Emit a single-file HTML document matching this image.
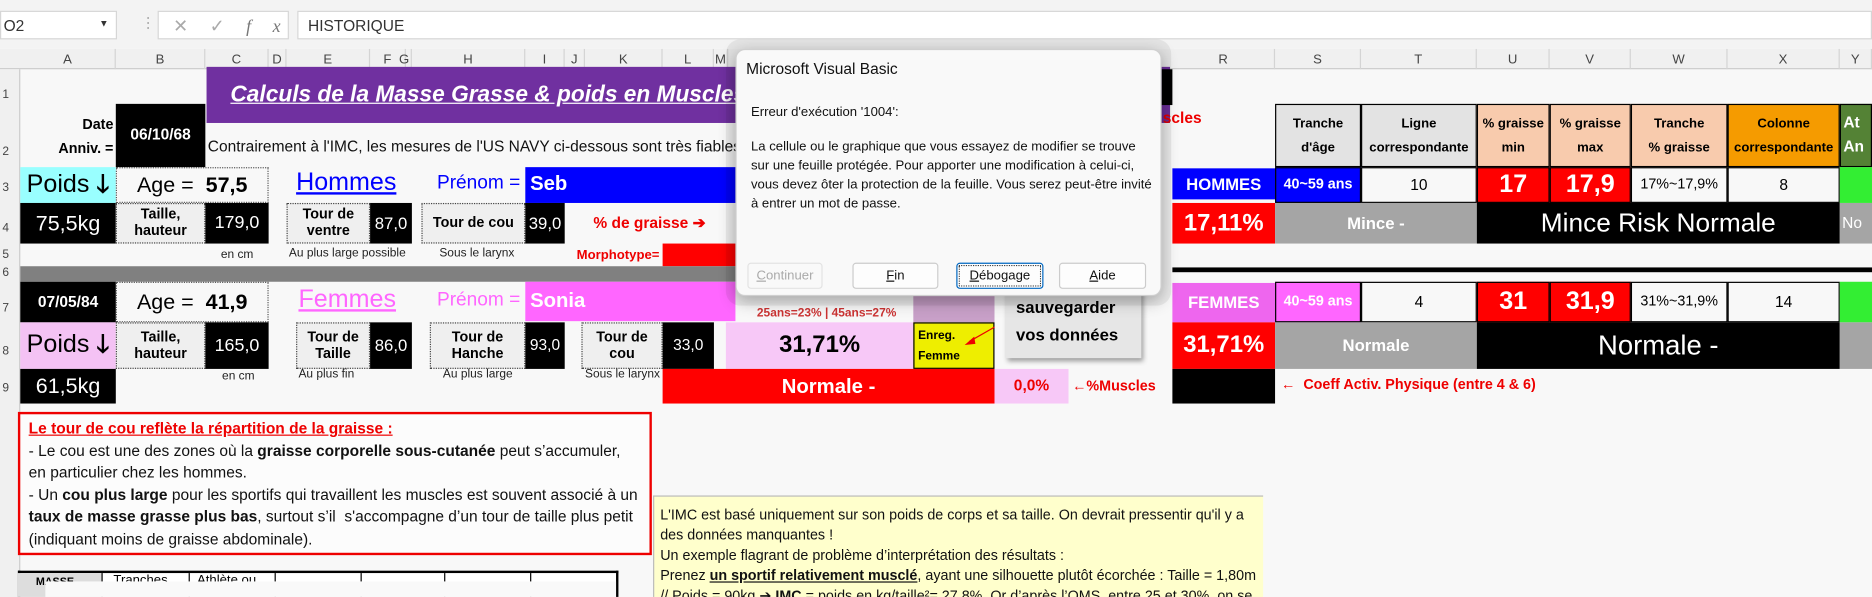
<!DOCTYPE html>
<html><head><meta charset="utf-8"><style>
*{margin:0;padding:0;box-sizing:border-box}
html,body{width:1872px;height:597px;overflow:hidden;background:#f8f8f8}
#w{position:absolute;left:0;top:0;width:1568px;height:500px;transform:scale(1.19388);transform-origin:0 0;font-family:"Liberation Sans",sans-serif;background:#f8f8f8}
.a{position:absolute}
.c{position:absolute;display:flex;align-items:center;justify-content:center;text-align:center;line-height:1.15}
.k{background:#000;color:#fff}
.n{font-family:"Liberation Sans Narrow","Liberation Sans",sans-serif}
.b{font-weight:bold}
.g{background:#efefef;border:1px dotted #444;font-weight:bold;font-size:12px}
.hd{border:1px solid #000;font-size:11px;font-weight:bold}
.sm{font-size:10px;color:#222}
.col{position:absolute;top:41px;height:17px;font-size:11px;color:#444;display:flex;align-items:center;justify-content:center;border-right:1px solid #d4d4d4}
</style></head><body><div id="w">
<!-- toolbar -->
<div class="a" style="left:0;top:0;width:1568px;height:41px;background:#f3f3f3"></div>
<div class="a" style="left:0;top:9px;width:98px;height:24px;background:#fff;border:1px solid #d6d6d6;font-size:13px;padding:4px 2px;color:#333">O2<span style="position:absolute;right:6px;top:5px;font-size:8px">▼</span></div>
<div class="a" style="left:118px;top:12px;color:#aaa;font-size:12px">⋮</div>
<div class="a" style="left:132px;top:9px;width:110px;height:24px;background:#fff;border:1px solid #d6d6d6;font-size:15px;color:#aaa;padding:3px 12px;letter-spacing:18px">✕✓<i style="font-family:'Liberation Serif';color:#777">fx</i></div>
<div class="a" style="left:249px;top:9px;width:1319px;height:24px;background:#fff;border:1px solid #d6d6d6;font-size:13px;padding:4px 8px;color:#333">HISTORIQUE</div>
<!-- column headers -->
<div class="a" style="left:0;top:41px;width:1568px;height:17px;background:#f0f0f0;border-bottom:1px solid #ccc"></div>
<div class="col" style="left:17px;width:80px">A</div><div class="col" style="left:97px;width:75px">B</div><div class="col" style="left:172px;width:53px">C</div><div class="col" style="left:225px;width:15px">D</div><div class="col" style="left:240px;width:70px">E</div><div class="col" style="left:310px;width:30px">F</div><div class="col" style="left:333px;width:12px">G</div><div class="col" style="left:345px;width:95px">H</div><div class="col" style="left:440px;width:33px">I</div><div class="col" style="left:473px;width:17px">J</div><div class="col" style="left:490px;width:65px">K</div><div class="col" style="left:555px;width:43px">L</div><div class="col" style="left:598px;width:12px">M</div>
<div class="col" style="left:982px;width:86px">R</div><div class="col" style="left:1068px;width:72px">S</div><div class="col" style="left:1140px;width:97px">T</div><div class="col" style="left:1237px;width:61px">U</div><div class="col" style="left:1298px;width:68px">V</div><div class="col" style="left:1366px;width:81px">W</div><div class="col" style="left:1447px;width:94px">X</div><div class="col" style="left:1541px;width:27px">Y</div>
<!-- row headers -->
<div class="a" style="left:0;top:58px;width:17px;height:442px;background:#f0f0f0;border-right:1px solid #ccc;font-size:10px;color:#444">
<div class="a" style="top:16px;left:2px">1</div><div class="a" style="top:64px;left:2px">2</div><div class="a" style="top:94px;left:2px">3</div><div class="a" style="top:128px;left:2px">4</div><div class="a" style="top:150px;left:2px">5</div><div class="a" style="top:165px;left:2px">6</div><div class="a" style="top:195px;left:2px">7</div><div class="a" style="top:231px;left:2px">8</div><div class="a" style="top:262px;left:2px">9</div></div>
<!-- title -->
<div class="a" style="left:173px;top:56px;width:807px;height:47px;background:#7030a0;color:#fff;font-size:19px;font-weight:bold;font-style:italic;text-decoration:underline;padding:13px 0 0 20px;overflow:hidden;white-space:nowrap">Calculs de la Masse Grasse &amp; poids en Muscles</div>
<div class="a k" style="left:973px;top:58px;width:9px;height:30px"></div>
<div class="a b" style="left:966px;top:91px;color:#e00;font-size:13px">uscles</div>
<div class="a b" style="left:20px;top:94px;width:75px;text-align:right;font-size:12px;line-height:20px">Date<br>Anniv. =</div>
<div class="c k b" style="left:97px;top:87px;width:75px;height:53px;font-size:13px">06/10/68</div>
<div class="a n" style="left:174px;top:115px;font-size:13px;color:#111;white-space:nowrap">Contrairement à l'IMC, les mesures de l'US NAVY ci-dessous sont très fiables</div>
<!-- header table -->
<div class="c hd" style="left:1068px;top:87px;width:72px;height:53px;background:#e3e3e3;line-height:20px">Tranche<br>d'âge</div>
<div class="c hd" style="left:1140px;top:87px;width:97px;height:53px;background:#e3e3e3;line-height:20px">Ligne<br>correspondante</div>
<div class="c hd" style="left:1237px;top:87px;width:61px;height:53px;background:#f8cbad;line-height:20px">% graisse<br>min</div>
<div class="c hd" style="left:1298px;top:87px;width:68px;height:53px;background:#f8cbad;line-height:20px">% graisse<br>max</div>
<div class="c hd" style="left:1366px;top:87px;width:81px;height:53px;background:#f8cbad;line-height:20px">Tranche<br>% graisse</div>
<div class="c hd" style="left:1447px;top:87px;width:94px;height:53px;background:#f59b00;line-height:20px">Colonne<br>correspondante</div>
<div class="a hd" style="left:1541px;top:87px;width:27px;height:53px;background:#548235;color:#fff;font-size:13px;padding:5px 2px;line-height:20px">At<br>An</div>
<!-- row 3 -->
<div class="c" style="left:17px;top:140px;width:80px;height:30px;background:#99ffff;font-size:21px">Poids&nbsp;<b>🡓</b></div>
<div class="c" style="left:97px;top:140px;width:128px;height:30px;font-size:18px;border:1px dotted #555">Age =&nbsp;&nbsp;<b>57,5</b></div>
<div class="a" style="left:248px;top:141px;font-size:21px;color:#00f;text-decoration:underline">Hommes</div>
<div class="a" style="left:366px;top:145px;font-size:16px;color:#00f">Prénom =</div>
<div class="a b" style="left:440px;top:140px;width:176px;height:30px;background:#00f;color:#fff;font-size:17px;padding:4px 4px">Seb</div>
<div class="c b" style="left:982px;top:141px;width:86px;height:26px;background:#00f;color:#fff;font-size:14px">HOMMES</div>
<div class="c b" style="left:1068px;top:140px;width:72px;height:30px;background:#00f;color:#fff;font-size:12px;border:1px solid #000">40~59 ans</div>
<div class="c" style="left:1140px;top:140px;width:97px;height:30px;font-size:13px;border:1px solid #000">10</div>
<div class="c b" style="left:1237px;top:140px;width:61px;height:30px;background:#f00;color:#fff;font-size:21px;border:1px solid #000">17</div>
<div class="c b" style="left:1298px;top:140px;width:68px;height:30px;background:#f00;color:#fff;font-size:21px;border:1px solid #000">17,9</div>
<div class="c n" style="left:1366px;top:140px;width:81px;height:30px;font-size:12px;border:1px solid #000">17%~17,9%</div>
<div class="c" style="left:1447px;top:140px;width:94px;height:30px;font-size:13px;border:1px solid #000">8</div>
<div class="a" style="left:1541px;top:140px;width:27px;height:30px;background:#33ee33"></div>
<!-- row 4 -->
<div class="c k" style="left:17px;top:170px;width:80px;height:34px;font-size:18px">75,5kg</div>
<div class="c g" style="left:97px;top:170px;width:75px;height:34px">Taille,<br>hauteur</div>
<div class="c k" style="left:172px;top:170px;width:53px;height:34px;font-size:15px">179,0</div>
<div class="c g" style="left:240px;top:170px;width:70px;height:34px">Tour de<br>ventre</div>
<div class="c k" style="left:310px;top:170px;width:35px;height:34px;font-size:14px">87,0</div>
<div class="c g" style="left:353px;top:170px;width:87px;height:34px">Tour de cou</div>
<div class="c k" style="left:440px;top:170px;width:33px;height:34px;font-size:14px">39,0</div>
<div class="a b" style="left:497px;top:179px;color:#e00;font-size:13px">% de graisse ➔</div>
<div class="c b" style="left:982px;top:170px;width:86px;height:34px;background:#f00;color:#fff;font-size:20px">17,11%</div>
<div class="c b" style="left:1068px;top:170px;width:169px;height:34px;background:#a5a5a5;color:#fff;font-size:14px">Mince -</div>
<div class="c" style="left:1237px;top:170px;width:304px;height:34px;background:#000;color:#fff;font-size:22px">Mince Risk Normale</div>
<div class="a" style="left:1541px;top:170px;width:27px;height:34px;background:#a5a5a5;color:#fff;font-size:13px;padding:9px 2px">No</div>
<!-- row 5 -->
<div class="a sm" style="left:185px;top:208px">en cm</div>
<div class="a sm n" style="left:242px;top:207px">Au plus large possible</div>
<div class="a sm n" style="left:368px;top:207px">Sous le larynx</div>
<div class="a b" style="left:483px;top:208px;color:#e00;font-size:11px">Morphotype=</div>
<div class="a" style="left:555px;top:204px;width:61px;height:19px;background:#f00"></div>
<!-- row 6 -->
<div class="a" style="left:17px;top:223px;width:599px;height:13px;background:#808080"></div>
<div class="a" style="left:982px;top:224px;width:586px;height:4px;background:#000"></div>
<!-- row 7 -->
<div class="c k b" style="left:17px;top:236px;width:80px;height:34px;font-size:13px">07/05/84</div>
<div class="c" style="left:97px;top:236px;width:128px;height:34px;font-size:18px;border:1px dotted #555">Age =&nbsp;&nbsp;<b>41,9</b></div>
<div class="a" style="left:250px;top:239px;font-size:21px;color:#f6f;text-decoration:underline">Femmes</div>
<div class="a" style="left:366px;top:243px;font-size:16px;color:#f6f">Prénom =</div>
<div class="a b" style="left:440px;top:236px;width:176px;height:33px;background:#ff66ff;color:#fff;font-size:17px;padding:6px 4px">Sonia</div>
<div class="a" style="left:765px;top:248px;width:68px;height:22px;background:#c8a0c8"></div>
<div class="a b" style="left:634px;top:257px;color:#c33;font-size:10px">25ans=23% | 45ans=27%</div>
<div class="a" style="left:842px;top:238px;width:114px;height:62px;background:#e6e6e6;box-shadow:2px 3px 4px #999;font-weight:bold;font-size:14px;line-height:23px;padding:8px 9px">sauvegarder<br>vos données</div>
<div class="c b" style="left:982px;top:237px;width:86px;height:33px;background:#ee66ee;color:#fff;font-size:14px">FEMMES</div>
<div class="c b" style="left:1068px;top:236px;width:72px;height:34px;background:#ff66ff;color:#fff;font-size:12px;border:1px solid #000">40~59 ans</div>
<div class="c" style="left:1140px;top:236px;width:97px;height:34px;font-size:13px;border:1px solid #000">4</div>
<div class="c b" style="left:1237px;top:236px;width:61px;height:34px;background:#f00;color:#fff;font-size:21px;border:1px solid #000">31</div>
<div class="c b" style="left:1298px;top:236px;width:68px;height:34px;background:#f00;color:#fff;font-size:21px;border:1px solid #000">31,9</div>
<div class="c n" style="left:1366px;top:236px;width:81px;height:34px;font-size:12px;border:1px solid #000">31%~31,9%</div>
<div class="c" style="left:1447px;top:236px;width:94px;height:34px;font-size:13px;border:1px solid #000">14</div>
<div class="a" style="left:1541px;top:236px;width:27px;height:34px;background:#33ee33"></div>
<!-- row 8 -->
<div class="c" style="left:17px;top:270px;width:80px;height:39px;background:#f4c2f4;font-size:21px">Poids&nbsp;<b>🡓</b></div>
<div class="c g" style="left:97px;top:270px;width:75px;height:39px">Taille,<br>hauteur</div>
<div class="c k" style="left:172px;top:270px;width:53px;height:39px;font-size:15px">165,0</div>
<div class="c g" style="left:248px;top:270px;width:62px;height:39px">Tour de<br>Taille</div>
<div class="c k" style="left:310px;top:270px;width:35px;height:39px;font-size:14px">86,0</div>
<div class="c g" style="left:360px;top:270px;width:80px;height:39px">Tour de<br>Hanche</div>
<div class="c k" style="left:440px;top:270px;width:33px;height:39px;font-size:13px">93,0</div>
<div class="c g" style="left:487px;top:270px;width:68px;height:39px">Tour de<br>cou</div>
<div class="c k" style="left:555px;top:270px;width:43px;height:39px;font-size:13px">33,0</div>
<div class="c b" style="left:608px;top:270px;width:157px;height:39px;background:#f7c8f7;font-size:20px">31,71%</div>
<div class="a b" style="left:765px;top:270px;width:68px;height:39px;background:#eeee00;border:1px solid #000;font-size:10px;line-height:17px;padding:2px 3px">Enreg.<br>Femme</div>
<svg class="a" style="left:800px;top:272px" width="34" height="20"><line x1="33" y1="2" x2="12" y2="14" stroke="#e00" stroke-width="1"/><polygon points="8,17 16,10 17,16" fill="#e00"/></svg>
<div class="c b" style="left:982px;top:270px;width:86px;height:39px;background:#f00;color:#fff;font-size:20px">31,71%</div>
<div class="c b" style="left:1068px;top:270px;width:169px;height:39px;background:#a5a5a5;color:#fff;font-size:14px">Normale</div>
<div class="c" style="left:1237px;top:270px;width:304px;height:39px;background:#000;color:#fff;font-size:23px">Normale -</div>
<div class="a" style="left:1541px;top:270px;width:27px;height:39px;background:#a5a5a5"></div>
<!-- row 9 -->
<div class="c k" style="left:17px;top:309px;width:80px;height:29px;font-size:18px">61,5kg</div>
<div class="a sm" style="left:186px;top:310px">en cm</div>
<div class="a sm n" style="left:250px;top:308px">Au plus fin</div>
<div class="a sm n" style="left:371px;top:308px">Au plus large</div>
<div class="a sm n" style="left:490px;top:308px">Sous le larynx</div>
<div class="c b" style="left:555px;top:309px;width:278px;height:29px;background:#f00;color:#fff;font-size:17px">Normale -</div>
<div class="c b" style="left:833px;top:309px;width:62px;height:29px;background:#f7c8f7;color:#e00;font-size:13px">0,0%</div>
<div class="a b" style="left:898px;top:316px;color:#e00;font-size:12px">←%Muscles</div>
<div class="a k" style="left:982px;top:309px;width:86px;height:29px"></div>
<div class="a b" style="left:1073px;top:315px;color:#e00;font-size:12px">←&nbsp; Coeff Activ. Physique (entre 4 &amp; 6)</div>
<!-- note box -->
<div class="a n" style="left:15px;top:345px;width:531px;height:120px;background:#fcfcfc;border:2px solid #e00;font-size:13px;line-height:18.5px;padding:3px 7px;color:#111">
<b style="color:#e00;text-decoration:underline">Le tour de cou reflète la répartition de la graisse :</b><br>- Le cou est une des zones où la <b>graisse corporelle sous-cutanée</b> peut s’accumuler, en particulier chez les hommes.<br>- Un <b>cou plus large</b> pour les sportifs qui travaillent les muscles est souvent associé à un <b>taux de masse grasse plus bas</b>, surtout s’il&nbsp; s'accompagne d’un tour de taille plus petit (indiquant moins de graisse abdominale).</div>
<!-- yellow box -->
<div class="a n" style="left:547px;top:415px;width:511px;height:85px;background:#ffffcc;border-top:1px solid #bbb;border-left:1px solid #bbb;font-size:12px;line-height:17px;padding:7px 5px;color:#111;overflow:hidden">L'IMC est basé uniquement sur son poids de corps et sa taille. On devrait pressentir qu'il y a des données manquantes !<br>Un exemple flagrant de problème d’interprétation des résultats :<br>Prenez <b style="text-decoration:underline">un sportif relativement musclé</b>, ayant une silhouette plutôt écorchée : Taille = 1,80m // Poids = 90kg ➔ <b>IMC</b> = poids en kg/taille²= 27,8%. Or d’après l’OMS, entre 25 et 30%, on se</div>
<!-- bottom table -->
<div class="a" style="left:15px;top:478px;width:503px;height:22px;border-top:2px solid #000;border-left:2px solid #000;border-right:2px solid #000;background:#fff"></div>
<div class="a" style="left:15px;top:480px;width:70px;height:20px;background:#ddd;font-size:9px;font-weight:bold;padding:2px 15px">MASSE</div>
<div class="a" style="left:85px;top:480px;width:1px;height:20px;background:#000"></div><div class="a" style="left:158px;top:480px;width:1px;height:20px;background:#000"></div><div class="a" style="left:230px;top:480px;width:1px;height:20px;background:#000"></div><div class="a" style="left:302px;top:480px;width:1px;height:20px;background:#000"></div><div class="a" style="left:372px;top:480px;width:1px;height:20px;background:#000"></div><div class="a" style="left:444px;top:480px;width:1px;height:20px;background:#000"></div>
<div class="a n" style="left:95px;top:480px;font-size:11px">Tranches</div><div class="a n" style="left:165px;top:480px;font-size:11px">Athlète ou</div>
<div class="a" style="left:38px;top:487px;width:478px;height:13px;background:#f9f9f9"></div>
<!-- dialog -->
<div class="a" style="left:608px;top:33px;width:373px;height:223px;border-radius:12px;background:rgba(0,0,0,0.06)"></div>
<div class="a" style="left:616px;top:41px;width:357px;height:207px;background:#f9f9f9;border:1px solid #cfcfcf;border-radius:8px;box-shadow:0 4px 14px rgba(0,0,0,0.3);font-size:11px;color:#111">
<div class="a" style="left:8px;top:8px;font-size:13px">Microsoft Visual Basic</div>
<div class="a" style="left:12px;top:46px">Erreur d'exécution '1004':</div>
<div class="a" style="left:12px;top:73px;line-height:16px;width:340px">La cellule ou le graphique que vous essayez de modifier se trouve sur une feuille protégée. Pour apporter une modification à celui-ci, vous devez ôter la protection de la feuille. Vous serez peut-être invité à entrer un mot de passe.</div>
<div class="c" style="left:9px;top:178px;width:63px;height:22px;border:1px solid #e3e3e3;border-radius:3px;color:#aaa"><u>C</u>ontinuer</div>
<div class="c" style="left:97px;top:178px;width:72px;height:22px;border:1px solid #ccc;border-radius:3px;background:#fdfdfd"><u>F</u>in</div>
<div class="c" style="left:184px;top:178px;width:73px;height:22px;border:1px solid #0067c0;outline:1px dotted #333;outline-offset:-3px;border-radius:3px;background:#fdfdfd"><u>D</u>ébogage</div>
<div class="c" style="left:270px;top:178px;width:73px;height:22px;border:1px solid #ccc;border-radius:3px;background:#fdfdfd"><u>A</u>ide</div>
</div>
</div></body></html>
